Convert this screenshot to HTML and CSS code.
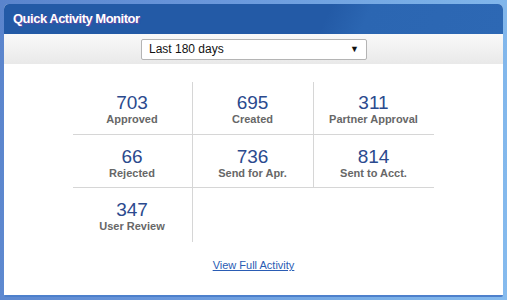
FILE: index.html
```html
<!DOCTYPE html>
<html>
<head>
<meta charset="utf-8">
<link rel="stylesheet" href="styles.css">
</head>
<body>
<div class="frame">
  <div class="panel">
    <div class="header">Quick Activity Monitor</div>
    <div class="toolbar">
      <div class="select">
        <span>Last 180 days</span>
        <span class="arrow">&#9660;</span>
      </div>
    </div>
    <div class="content">
      <div class="grid">
        <div class="cell r1 c1"><div class="num">703</div><div class="lbl">Approved</div></div>
        <div class="cell r1 c2"><div class="num">695</div><div class="lbl">Created</div></div>
        <div class="cell r1 c3"><div class="num">311</div><div class="lbl">Partner Approval</div></div>
        <div class="cell r2 c1"><div class="num">66</div><div class="lbl">Rejected</div></div>
        <div class="cell r2 c2"><div class="num">736</div><div class="lbl">Send for Apr.</div></div>
        <div class="cell r2 c3"><div class="num">814</div><div class="lbl">Sent to Acct.</div></div>
        <div class="cell r3 c1"><div class="num">347</div><div class="lbl">User Review</div></div>
      </div>
      <a class="link" href="#">View Full Activity</a>
    </div>
  </div>
</div>
</body>
</html>
```
FILE: styles.css
```css
html, body {
  margin: 0;
  padding: 0;
}
body {
  width: 507px;
  height: 300px;
  overflow: hidden;
  font-family: "Liberation Sans", Arial, sans-serif;
}
.frame {
  box-sizing: border-box;
  width: 507px;
  height: 300px;
  padding: 4px 4px 4px 4px;
  background: linear-gradient(100deg, #5a84cc 0%, #6a98dc 40%, #79aee6 75%, #86bbee 100%);
}
.panel {
  height: 293px;
  background: #fff;
  border-radius: 5px 5px 2px 2px;
  overflow: hidden;
  display: flex;
  flex-direction: column;
  border-bottom: 2px solid #4d80cc;
  box-sizing: border-box;
}
.header {
  height: 30px;
  flex: none;
  background: linear-gradient(115deg, #235aa6 0%, #235aa6 64%, #2b66b2 72%, #2d68b4 100%);
  color: #fff;
  font-weight: bold;
  font-size: 13px;
  letter-spacing: -0.5px;
  line-height: 30px;
  padding-left: 9px;
  text-shadow: 1px 1px 1px #6a4aa8;
}
.toolbar {
  height: 30px;
  flex: none;
  background: linear-gradient(#f9f9f9, #e9e9e9);
  display: flex;
  justify-content: center;
  align-items: center;
}
.select {
  box-sizing: border-box;
  width: 226px;
  height: 21px;
  margin-left: 1px;
  background: #fff;
  border: 1px solid #b4b4b4;
  border-radius: 2px;
  display: flex;
  justify-content: space-between;
  align-items: center;
  padding: 0 7px 0 7px;
  font-size: 12px;
  color: #111;
}
.arrow {
  font-size: 9px;
  color: #111;
}
.content {
  flex: 1;
  display: flex;
  flex-direction: column;
  align-items: center;
  padding-top: 18px;
}
.grid {
  display: grid;
  grid-template-columns: 120px 121px 120px;
  grid-template-rows: 53px 53px 54px;
  margin-left: -1px;
}
.cell {
  display: flex;
  flex-direction: column;
  align-items: center;
  box-sizing: border-box;
}
.c1, .c2 {
  border-right: 1px solid #d6d6d6;
}
.r1, .r2 {
  border-bottom: 1px solid #d6d6d6;
}
.r1 {
  padding-top: 10px;
}
.r2 {
  padding-top: 11px;
}
.r3 {
  padding-top: 11px;
}
.num {
  font-size: 19px;
  line-height: 21px;
  color: #2b4a8e;
}
.lbl {
  font-size: 11px;
  font-weight: bold;
  color: #676767;
  line-height: 13px;
}
.link {
  margin-top: 17px;
  font-size: 11px;
  color: #2a5cb4;
  text-decoration: underline;
}
```
